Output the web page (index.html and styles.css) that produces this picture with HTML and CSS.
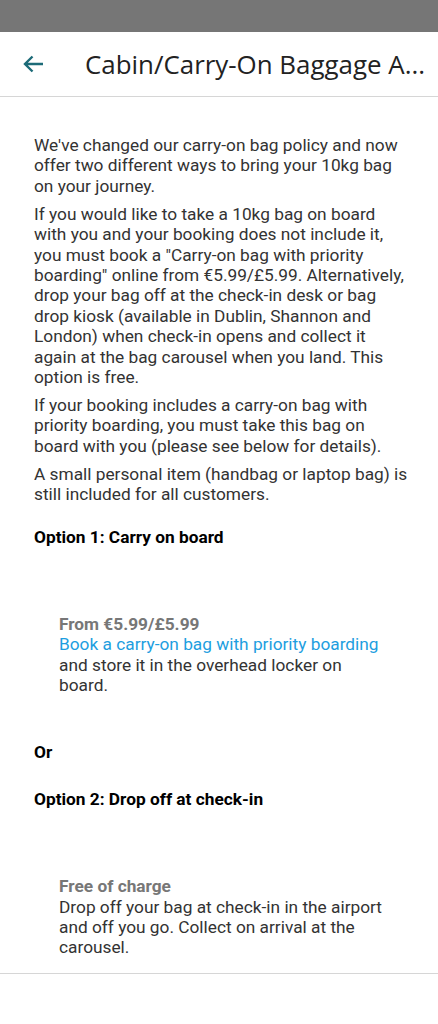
FILE: index.html
```html
<!DOCTYPE html>
<html>
<head>
<meta charset="utf-8">
<link rel="stylesheet" href="styles.css">
</head>
<body>
<div class="status"></div>
<header class="bar">
  <svg class="back" width="22" height="22" viewBox="0 0 22 22"><path d="M21 11H3M10.5 3.5L3 11l7.5 7.5" fill="none" stroke="#1d6b78" stroke-width="2.4"/></svg>
  <h1 class="title">Cabin/Carry-On Baggage A...</h1>
</header>
<main class="content">
  <p>We've changed our carry-on bag policy and now offer two different ways to bring your 10kg bag on your journey.</p>
  <p>If you would like to take a 10kg bag on board with you and your booking does not include it, you must book a "Carry-on bag with priority boarding" online from €5.99/£5.99. Alternatively, drop your bag off at the check-in desk or bag drop kiosk (available in Dublin, Shannon and London) when check-in opens and collect it again at the bag carousel when you land. This option is free.</p>
  <p>If your booking includes a carry-on bag with priority boarding, you must take this bag on board with you (please see below for details).</p>
  <p>A small personal item (handbag or laptop bag) is still included for all customers.</p>
  <h2 class="opt">Option 1: Carry on board</h2>
  <div class="detail">
    <div class="price">From €5.99/£5.99</div>
    <a class="link">Book a carry-on bag with priority boarding</a>
    <div>and store it in the overhead locker on board.</div>
  </div>
  <h2 class="opt or">Or</h2>
  <h2 class="opt">Option 2: Drop off at check-in</h2>
  <div class="detail last">
    <div class="price">Free of charge</div>
    <div>Drop off your bag at check-in in the airport and off you go. Collect on arrival at the carousel.</div>
  </div>
</main>
<div class="rule"></div>
</body>
</html>
```
FILE: styles.css
```css
html, body { margin: 0; padding: 0; background: #fff; }
body { width: 438px; font-family: Roboto, "Noto Sans", sans-serif; }
.status { height: 32px; background: #767676; }
.bar {
  height: 65px;
  display: flex;
  align-items: center;
  border-bottom: 1px solid #d6d6d6;
  box-sizing: border-box;
}
.back { margin-left: 22px; flex: none; }
.title {
  margin: 0 0 0 41px;
  font-family: "Open Sans", "DejaVu Sans", sans-serif;
  font-weight: 400;
  font-size: 25.9px;
  color: #222;
  white-space: nowrap;
}
.content {
  padding: 38px 27px 0 34px;
  color: #333;
  font-size: 17.3px;
  line-height: 20.4px;
}
.content p { margin: 0 0 7.5px; }
.opt {
  margin: 0;
  font-size: 17.3px;
  font-weight: 700;
  color: #000;
  line-height: 20.4px;
}
.content p + .opt { margin-top: 23px; }
.detail { padding: 66px 25px 0 25px; margin-bottom: 47px; }
.price { color: #777; font-weight: 700; }
.link { color: #1d9ee0; display: block; text-decoration: none; }
.or { margin-bottom: 26px; }
.detail.last { padding-top: 67px; margin-bottom: 15px; }
.rule { border-top: 1px solid #d6d6d6; }
```
